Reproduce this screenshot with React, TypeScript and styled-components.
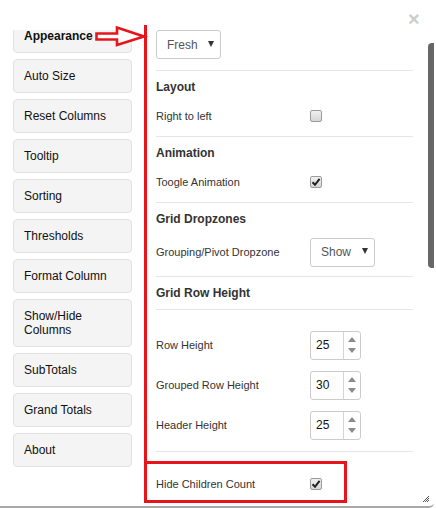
import React from 'react'
import styled, { createGlobalStyle } from 'styled-components';

const GlobalStyle = createGlobalStyle`
  html, body {
    margin: 0;
    padding: 0;
    background: #fff;
    font-family: "Liberation Sans", Arial, sans-serif;
  }
`;

const navItems = [
  { label: 'Appearance', active: true },
  { label: 'Auto Size' },
  { label: 'Reset Columns' },
  { label: 'Tooltip' },
  { label: 'Sorting' },
  { label: 'Thresholds' },
  { label: 'Format Column' },
  { label: 'Show/Hide Columns', wrap: true },
  { label: 'SubTotals' },
  { label: 'Grand Totals' },
  { label: 'About' },
];

const heights = [
  { label: 'Row Height', value: 25 },
  { label: 'Grouped Row Height', value: 30 },
  { label: 'Header Height', value: 25 },
];

const Checkbox = ({ checked }: { checked?: boolean }) => (
  <CheckBoxStyled>
    {checked && (
      <svg width="10" height="10" viewBox="0 0 10 10">
        <path d="M1.5 5.2 L4 7.8 L8.6 1.8" fill="none" stroke="#222" strokeWidth="2" />
      </svg>
    )}
  </CheckBoxStyled>
);

const Select = ({ value }: { value: string }) => (
  <SelectStyled>
    <span>{value}</span>
    <Caret />
  </SelectStyled>
);

const Spinner = ({ value }: { value: number }) => (
  <SpinnerStyled>
    <span className="val">{value}</span>
    <div className="arrows">
      <Tri $up />
      <Tri />
    </div>
  </SpinnerStyled>
);

const App = () => {
  return (
    <>
      <GlobalStyle />
      <Dialog>
        <LeftCol>
          <NavViewport>
            <NavList>
              {navItems.map((item) => (
                <NavButton key={item.label} $active={item.active} $wrap={item.wrap}>
                  {item.label}
                </NavButton>
              ))}
            </NavList>
          </NavViewport>
        </LeftCol>

        <RightPanel>
          <ThemeRow>
            <Select value="Fresh" />
          </ThemeRow>

          <Section>
            <Heading>Layout</Heading>
            <Row>
              <Label>Right to left</Label>
              <Checkbox />
            </Row>
          </Section>

          <Section>
            <Heading>Animation</Heading>
            <Row>
              <Label>Toogle Animation</Label>
              <Checkbox checked />
            </Row>
          </Section>

          <Section>
            <Heading>Grid Dropzones</Heading>
            <Row $h={32}>
              <Label>Grouping/Pivot Dropzone</Label>
              <Select value="Show" />
            </Row>
          </Section>

          <Section $pb={6}>
            <Heading>Grid Row Height</Heading>
          </Section>

          <Section $pt={15} $pb={6}>
            {heights.map((h) => (
              <Row key={h.label} $h={40} $gap={0}>
                <Label>{h.label}</Label>
                <Spinner value={h.value} />
              </Row>
            ))}
          </Section>

          <Section $pt={20}>
            <Row $gap={0}>
              <Label>Hide Children Count</Label>
              <Checkbox checked />
            </Row>
          </Section>
        </RightPanel>

        <CloseButton>×</CloseButton>
        <ScrollThumb />
        <ResizeGrip viewBox="0 0 8 8" width="8" height="8">
          <path d="M7 1 L1 7 M7 3 L3 7 M7 5 L5 7" stroke="#555" strokeWidth="1" />
        </ResizeGrip>

        {/* red annotation overlay */}
        <RedLine />
        <RedBox />
        <Arrow width="60" height="30" viewBox="90 22 60 30">
          <polygon
            points="96.5,33.5 117,33.5 117,27.5 144,36.5 117,45 117,39.5 96.5,39.5"
            fill="#fff"
            stroke="#e8141b"
            strokeWidth="2.6"
          />
        </Arrow>
      </Dialog>
    </>
  )
}

const Dialog = styled.div`
  position: relative;
  display: flex;
  width: 434px;
  height: 506px;
  background: #fff;
  border-bottom: 2px solid #a9a9a9;
  border-bottom-right-radius: 5px;
  box-sizing: content-box;
  overflow: hidden;
`;

const LeftCol = styled.div`
  display: flex;
  flex-direction: column;
  width: 145px;
  padding: 30px 13px 0 13px;
  box-sizing: border-box;
`;

const NavViewport = styled.div`
  overflow: hidden;
  flex: 1;
`;

const NavList = styled.div`
  display: flex;
  flex-direction: column;
  gap: 6px;
  margin-top: -11px;
`;

const NavButton = styled.div<{ $active?: boolean; $wrap?: boolean }>`
  width: 119px;
  box-sizing: border-box;
  padding: ${(p) => (p.$wrap ? '9px 40px 9px 10px' : '9px 10px')};
  background: #f4f4f4;
  border: 1px solid #e2e2e2;
  border-radius: 4px;
  font-size: 12px;
  line-height: 14px;
  color: #111;
  font-weight: ${(p) => (p.$active ? 'bold' : 'normal')};
`;

const RightPanel = styled.div`
  flex: 1;
  padding: 30px 21px 0 11px;
  color: #333;
`;

const ThemeRow = styled.div`
  margin-bottom: 11px;
`;

const Section = styled.div<{ $pt?: number; $pb?: number }>`
  border-top: 1px solid #e6e6e6;
  padding-top: ${(p) => p.$pt ?? 6}px;
  padding-bottom: ${(p) => p.$pb ?? 8}px;
`;

const Heading = styled.div`
  font-size: 12px;
  font-weight: bold;
  line-height: 20px;
  color: #333;
`;

const Row = styled.div<{ $h?: number; $gap?: number }>`
  display: grid;
  grid-template-columns: 154px auto;
  align-items: center;
  height: ${(p) => p.$h ?? 24}px;
  margin-top: ${(p) => p.$gap ?? 7}px;
`;

const Label = styled.span`
  font-size: 11px;
  color: #333;
`;

const CheckBoxStyled = styled.span`
  display: inline-flex;
  align-items: center;
  justify-content: center;
  width: 12px;
  height: 12px;
  box-sizing: border-box;
  border: 1px solid #9c9c9c;
  border-radius: 2px;
  background: linear-gradient(#f0f0f0, #d6d6d6);
`;

const SelectStyled = styled.div`
  display: inline-flex;
  align-items: center;
  justify-content: space-between;
  width: 65px;
  height: 29px;
  box-sizing: border-box;
  padding: 0 6px 0 10px;
  border: 1px solid #cccccc;
  border-radius: 3px;
  font-size: 12px;
  color: #555;
  background: #fff;
`;

const Caret = styled.span`
  width: 0;
  height: 0;
  border-left: 3.5px solid transparent;
  border-right: 3.5px solid transparent;
  border-top: 6px solid #333;
  margin-top: -2px;
`;

const SpinnerStyled = styled.div`
  display: inline-flex;
  width: 51px;
  height: 29px;
  box-sizing: border-box;
  border: 1px solid #cccccc;
  border-radius: 3px;
  background: #fff;

  .val {
    flex: 1;
    display: flex;
    align-items: center;
    padding-left: 5px;
    font-size: 12px;
    color: #111;
    border-right: 1px solid #d4d4d4;
  }

  .arrows {
    width: 16px;
    display: flex;
    flex-direction: column;
    align-items: center;
    justify-content: space-between;
    padding: 5px 0 6px;
    box-sizing: border-box;
  }
`;

const Tri = styled.span<{ $up?: boolean }>`
  width: 0;
  height: 0;
  border-left: 4px solid transparent;
  border-right: 4px solid transparent;
  ${(p) => (p.$up ? 'border-bottom: 5px solid #8a8a8a;' : 'border-top: 5px solid #8a8a8a;')}
`;

const CloseButton = styled.span`
  position: absolute;
  top: 8px;
  left: 408px;
  font-size: 20px;
  font-weight: bold;
  line-height: 22px;
  color: #cdcdcd;
`;

const ScrollThumb = styled.div`
  position: absolute;
  left: 428px;
  top: 43px;
  width: 8px;
  height: 225px;
  border-radius: 4px 0 0 4px;
  background: #676767;
`;

const ResizeGrip = styled.svg`
  position: absolute;
  right: 4px;
  bottom: 3px;
`;

const RedLine = styled.div`
  position: absolute;
  left: 144px;
  top: 25px;
  width: 3px;
  height: 478px;
  background: #e8141b;
`;

const RedBox = styled.div`
  position: absolute;
  left: 144px;
  top: 461px;
  width: 203px;
  height: 42px;
  box-sizing: border-box;
  border: 3px solid #e8141b;
`;

const Arrow = styled.svg`
  position: absolute;
  left: 90px;
  top: 22px;
`;

export default App
